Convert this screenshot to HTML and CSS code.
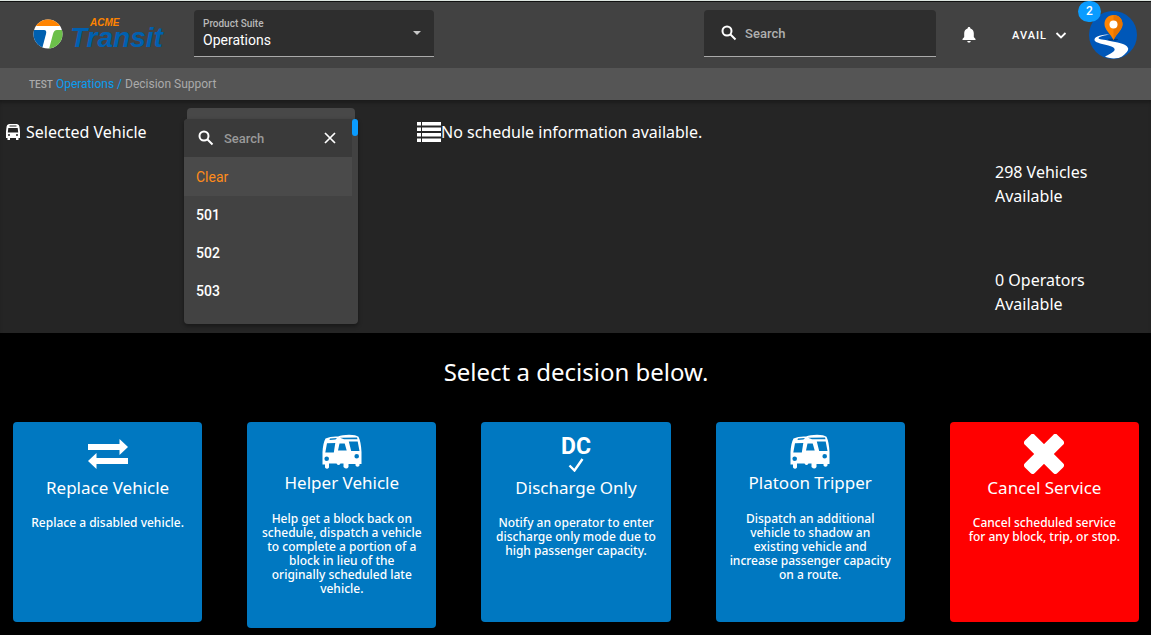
FILE: index.html
```
<!DOCTYPE html>
<html lang="en">
<head>
    <meta charset="UTF-8">
    <meta name="viewport" content="width=device-width, initial-scale=1.0">
    <title>Decision Support</title>
    <link rel="stylesheet" href="styles.css">
</head>
<body>
    <header class="topbar">
        <a class="logo" href="#" aria-label="ACME Transit">
            <svg class="logo-mark" viewBox="0 0 30 30">
                <clipPath id="logoClip"><circle cx="15" cy="15" r="14.5"/></clipPath>
                <g clip-path="url(#logoClip)">
                    <rect width="30" height="30" fill="#fff"/>
                    <path d="M0 0h30v7H0z" fill="#ff8400"/>
                    <path d="M0 11h11q3 0 2 4L9 30H0z" fill="#0060b0"/>
                    <path d="M30 11h-6q-3 0-4 4l-4 15h14z" fill="#6cc04a"/>
                </g>
            </svg>
            <span class="logo-text">
                <span class="logo-acme">ACME</span>
                <span class="logo-transit">Transit</span>
            </span>
        </a>
        <div class="suite">
            <label for="suite">Product Suite</label>
            <select id="suite">
                <option>Operations</option>
            </select>
            <svg class="suite-arrow" viewBox="0 0 8 4"><path d="M0 0h8L4 4z" fill="#c8c8c8"/></svg>
        </div>
        <div class="top-search">
            <svg class="icon-search" viewBox="0 0 16 16"><circle cx="6" cy="6" r="4.5"/><path d="M9.5 9.5l5 5"/></svg>
            <input type="text" placeholder="Search" aria-label="Search">
        </div>
        <div class="account">
            <button class="bell" aria-label="Notifications">
                <svg viewBox="0 0 14 16"><path d="M7 0c-.9 0-1.400.6-1.400 1.500C3.300 2.100 2.200 4 2.200 6.300V10L.5 12v1h13v-1l-1.700-2V6.300c0-2.300-1.100-4.200-3.400-4.800C8.400.6 7.900 0 7 0zM5.300 14h3.400c0 1-.7 1.600-1.700 1.600S5.300 15 5.300 14z" fill="#fff"/></svg>
            </button>
            <button class="user">AVAIL
                <svg viewBox="0 0 12 12"><path d="M1.500 4L6 8.500 10.500 4" fill="none" stroke="#fff" stroke-width="1.800"/></svg>
            </button>
            <div class="avatar">
                <svg viewBox="0 0 48 48">
                    <clipPath id="avatarClip"><circle cx="24" cy="24" r="24"/></clipPath>
                    <circle cx="24" cy="24" r="24" fill="#0057b8"/>
                    <path clip-path="url(#avatarClip)" d="M21 23.500C13 23.500 6 25 5.500 28.500c-.4 3 6 4 12 5.500 7 1.800 10 3.500 7 6.500-2 2-5 3-8.500 5 3 2 13 3 17 0 4-3 7-6 6-8.500-2-5-12-5.500-18-7C15 28.500 9.500 28.500 9.500 27c.5-1.600 6-2.500 11.500-3.500z" fill="#fff"/>
                    <ellipse cx="24" cy="28.500" rx="5" ry="1" fill="#003d80"/>
                    <path d="M24.500 4C19 4 15.500 8 15.500 13c0 6 6 9.500 9 16 3-6.500 9-10 9-16 0-5-3.500-9-9-9z" fill="#ff8400"/>
                    <path d="M24.500 4c5.500 0 9 4 9 9 0 6-6 9.500-9 16z" fill="#e87400"/>
                    <circle cx="24.500" cy="13.500" r="4" fill="#fff"/>
                </svg>
                <span class="badge">2</span>
            </div>
        </div>
    </header>

    <nav class="breadcrumb">
        <span class="env">TEST</span>
        <a href="#">Operations /</a>
        <span>Decision Support</span>
    </nav>

    <section class="info">
        <div class="vehicle">
            <span class="vehicle-label">
                <svg class="bus" viewBox="0 0 14 16"><path fill="#fff" fill-rule="evenodd" d="M3 0h8q2.400.5 2.400 2.500l.6 5V14h-1.500v2H10v-2H4v2H1.500v-2H0V7.500l.6-5Q.6.500 3 0zM3.500 1.500v1h7v-1zM2.300 4l-.5 4.500h10.400L11.700 4zM3 10a1 1 0 1 0 0 2 1 1 0 0 0 0-2zm8 0a1 1 0 1 0 0 2 1 1 0 0 0 0-2z"/></svg>
                Selected Vehicle
            </span>
            <div class="picker">
                <button class="picker-field" aria-label="Selected Vehicle"></button>
                <div class="menu">
                    <div class="menu-search">
                        <svg class="icon-search" viewBox="0 0 16 16"><circle cx="6" cy="6" r="4.500"/><path d="M9.500 9.500l5 5"/></svg>
                        <input type="text" placeholder="Search" aria-label="Search vehicles">
                        <button class="menu-close" aria-label="Clear search">
                            <svg viewBox="0 0 12 12"><path d="M1 1l10 10M11 1L1 11" stroke="#fff" stroke-width="1.700"/></svg>
                        </button>
                    </div>
                    <button class="option clear">Clear</button>
                    <button class="option">501</button>
                    <button class="option">502</button>
                    <button class="option">503</button>
                    <span class="scroll-thumb"></span>
                </div>
            </div>
        </div>
        <div class="schedule">
            <svg class="list" viewBox="0 0 24 20"><path fill="#fff" d="M0 0h4v3.500H0zM5 0h19v3.500H5zM0 5.500h4V9H0zM5 5.500h19V9H5zM0 11h4v3.500H0zM5 11h19v3.500H5zM0 16.500h4V20H0zM5 16.500h19V20H5z"/></svg>
            No schedule information available.
        </div>
        <div class="counts">
            <p>298 Vehicles Available</p>
            <p>0 Operators Available</p>
        </div>
    </section>

    <main class="decisions">
        <h1>Select a decision below.</h1>
        <div class="cards">
            <button class="card">
                <svg class="card-icon" viewBox="0 0 40 40"><path fill="#fff" d="M0 10h31.500V5l8.500 8-8.500 8v-5H0zM40 30H8.500v5L0 27l8.500-8v5H40z"/></svg>
                <span class="card-title">Replace Vehicle</span>
                <span class="card-text">Replace a disabled vehicle.</span>
            </button>
            <button class="card">
                <svg class="card-icon wide" viewBox="0 0 40 35"><use href="#buses"/></svg>
                <span class="card-title">Helper Vehicle</span>
                <span class="card-text">Help get a block back on schedule, dispatch a vehicle to complete a portion of a block in lieu of the originally scheduled late vehicle.</span>
            </button>
            <button class="card">
                <span class="card-icon dc">
                    <span>DC</span>
                    <svg viewBox="0 0 16 14"><path d="M1.500 7.500l5 5L14.500 1" fill="none" stroke="#fff" stroke-width="2.400"/></svg>
                </span>
                <span class="card-title">Discharge Only</span>
                <span class="card-text">Notify an operator to enter discharge only mode due to high passenger capacity.</span>
            </button>
            <button class="card">
                <svg class="card-icon wide" viewBox="0 0 40 35"><use href="#buses"/></svg>
                <span class="card-title">Platoon Tripper</span>
                <span class="card-text">Dispatch an additional vehicle to shadow an existing vehicle and increase passenger capacity on a route.</span>
            </button>
            <button class="card cancel">
                <svg class="card-icon" viewBox="0 0 40 40">
                    <g fill="#fff">
                        <rect x="-3" y="13" width="46" height="14" rx="3" transform="rotate(45 20 20)"/>
                        <rect x="-3" y="13" width="46" height="14" rx="3" transform="rotate(-45 20 20)"/>
                    </g>
                </svg>
                <span class="card-title">Cancel Service</span>
                <span class="card-text">Cancel scheduled service for any block, trip, or stop.</span>
            </button>
        </div>
    </main>

    <!-- Shared pair-of-buses icon -->
    <svg class="symbols">
        <symbol id="buses" viewBox="0 0 40 35">
            <path fill="#fff" fill-rule="evenodd" d="M3.500 4.500Q9 2 16 2.500 20 .8 27 .8q7 0 9.500 2Q39 8 39.500 18v12h-2v1.500q-2 2.500-4 0V30h-7v3q-2 3-5 0v-3.500h-3q-2 3-4 0H7v4q-2 2.500-4 0v-3H.5V18Q1 9 3.500 4.500zM8 4.500L7.500 6l6-.5 1.500-1.500zM18 3.800l4 1.400h13.500l-.5-1.700zM5 9.200L3.300 18.500h8.500L13.300 9zM17.500 9.500l-1.500 7h8.700l-2-7zM26.800 7.500l2.400 9.500h8.300l-1.800-9.500zM4.700 22.400a2.300 2.300 0 1 0 0 4.600 2.300 2.300 0 0 0 0-4.600zM34.700 20a2.300 2.300 0 1 0 0 4.600 2.300 2.300 0 0 0 0-4.600z"/>
        </symbol>
    </svg>
</body>
</html>
```
FILE: styles.css
```
* {
    box-sizing: border-box;
}

body {
    margin: 0;
    background-color: #000;
    color: #fff;
    font-family: "Noto Sans", sans-serif;
    font-size: 16px;
}

button, input, select {
    border: none;
    background: none;
    color: inherit;
    font-family: Roboto, sans-serif;
    padding: 0;
}

svg {
    display: block;
    flex-shrink: 0;
}

.symbols {
    position: absolute;
    width: 0;
    height: 0;
}

/* Top bar */
.topbar {
    display: flex;
    align-items: flex-start;
    height: 68px;
    padding: 8px 14px 0 33px;
    border-top: 1px solid #dde5e0;
    background-color: #424242;
    box-shadow: inset 0 1px #111;
    font-family: Roboto, sans-serif;
}

.logo {
    display: flex;
    align-items: center;
    gap: 7px;
    width: 161px;
    height: 50px;
    text-decoration: none;
    font-style: italic;
}

.logo-mark {
    width: 30px;
    height: 30px;
}

.logo-text {
    display: flex;
    flex-direction: column;
    font-family: "Liberation Sans", sans-serif;
    font-weight: 700;
}

.logo-acme {
    padding-left: 20px;
    color: #ff8400;
    font-size: 10px;
    line-height: 8px;
}

.logo-transit {
    color: #0060b0;
    font-size: 28px;
    line-height: 22px;
}

.suite {
    position: relative;
    width: 240px;
    height: 47px;
    margin-top: 1px;
    padding: 8px 9px;
    border-bottom: 1px solid #aaa;
    border-radius: 4px 4px 0 0;
    background-color: #2e2e2e;
}

.suite label {
    display: block;
    color: #b8b8b8;
    font-size: 10px;
    font-weight: 500;
    line-height: 12px;
}

.suite select {
    width: 100%;
    appearance: none;
    font-size: 14px;
    line-height: 20px;
}

.suite-arrow {
    position: absolute;
    right: 13px;
    top: 21px;
    width: 8px;
    height: 4px;
}

.icon-search {
    width: 16px;
    height: 16px;
    fill: none;
    stroke: #fff;
    stroke-width: 2;
}

.top-search {
    display: flex;
    align-items: center;
    gap: 8px;
    width: 232px;
    height: 47px;
    margin-top: 1px;
    margin-left: auto;
    padding: 0 17px;
    border-bottom: 1px solid #aaa;
    border-radius: 4px 4px 0 0;
    background-color: #2e2e2e;
}

.top-search input, .menu-search input {
    min-width: 0;
    flex: 1;
    font-size: 13px;
    font-weight: 500;
}

.top-search input::placeholder {
    color: #b0b0b0;
}

.account {
    display: flex;
    align-items: center;
    height: 52px;
    margin-left: 26px;
}

.bell svg {
    width: 14px;
    height: 16px;
}

.user {
    display: flex;
    align-items: center;
    gap: 8px;
    margin-left: 36px;
    font-size: 11px;
    font-weight: 500;
    letter-spacing: 1px;
}

.user svg {
    width: 12px;
    height: 12px;
}

.avatar {
    position: relative;
    margin-left: 22px;
}

.avatar svg {
    width: 48px;
    height: 48px;
}

.badge {
    position: absolute;
    left: -11px;
    top: -10px;
    width: 23px;
    height: 21px;
    border-radius: 11px;
    background-color: #0a9cff;
    font-size: 12px;
    font-weight: 500;
    line-height: 20px;
    text-align: center;
}

/* Breadcrumb */
.breadcrumb {
    display: flex;
    align-items: center;
    gap: 3px;
    height: 32px;
    padding-left: 29px;
    background-color: #555;
    color: #aaa;
    font-family: Roboto, sans-serif;
    font-size: 12px;
}

.breadcrumb .env {
    font-size: 10px;
    font-weight: 500;
}

.breadcrumb a {
    color: #0a9cf0;
    text-decoration: none;
}

/* Vehicle and schedule info */
.info {
    display: grid;
    grid-template-columns: 417px 1fr 156px;
    min-height: 233px;
    background-color: #252525;
    box-shadow: inset 0 4px 4px -2px #181818;
    line-height: 24px;
}

.vehicle {
    display: flex;
    align-items: flex-start;
    padding: 8px 0 0 6px;
}

.vehicle-label {
    display: flex;
    align-items: center;
    gap: 6px;
    width: 181px;
    padding-top: 12px;
    white-space: nowrap;
}

.bus {
    width: 14px;
    height: 16px;
}

.picker {
    position: relative;
    width: 168px;
}

.picker-field {
    display: block;
    width: 100%;
    height: 40px;
    border-radius: 4px;
    background-color: #484848;
}

.menu {
    position: absolute;
    left: -3px;
    top: 11px;
    width: 174px;
    padding-bottom: 14px;
    border-radius: 4px;
    background-color: #424242;
    box-shadow: 0 2px 4px rgba(0, 0, 0, 0.4);
}

.menu-search {
    display: flex;
    align-items: center;
    gap: 10px;
    height: 38px;
    margin-right: 6px;
    padding: 0 16px 0 14px;
    border-radius: 4px 0 0 0;
    background-color: #3a3a3a;
}

.menu-search input::placeholder {
    color: #999;
}

.menu-close svg {
    width: 12px;
    height: 12px;
}

.option {
    display: block;
    width: 100%;
    height: 38px;
    padding-left: 12px;
    font-size: 14px;
    font-weight: 500;
    text-align: left;
}

.option.clear {
    width: 168px;
    height: 39px;
    background-color: #4a4a4a;
    color: #ff8c1a;
    font-weight: 400;
}

.scroll-thumb {
    position: absolute;
    right: 0;
    top: 0;
    width: 6px;
    height: 17px;
    border-radius: 3px;
    background-color: #0a9cff;
}

.schedule {
    display: flex;
    align-items: flex-start;
    padding-top: 20px;
}

.list {
    width: 24px;
    height: 20px;
    margin-top: 2px;
}

.counts {
    padding: 60px 40px 0 0;
}

.counts p {
    margin: 0 0 60px;
}

.counts p:last-child {
    margin-bottom: 0;
}

/* Decision cards */
.decisions {
    padding: 23px 12px 6px 13px;
}

h1 {
    margin: 0 0 35px;
    font-size: 24px;
    font-weight: 400;
    line-height: 31px;
    text-align: center;
}

.cards {
    display: grid;
    grid-template-columns: repeat(5, 1fr);
    gap: 45px;
    align-items: start;
}

.card {
    display: flex;
    flex-direction: column;
    align-items: center;
    min-height: 200px;
    padding: 12px 14px 32px;
    border-radius: 4px;
    background-color: #0078c1;
    font-family: "Noto Sans", sans-serif;
    text-align: center;
    cursor: pointer;
}

.card.cancel {
    background-color: #f00;
}

.card-icon {
    width: 40px;
    height: 40px;
}

.card-icon.wide {
    height: 35px;
}

.dc {
    display: flex;
    flex-direction: column;
    align-items: center;
    padding-top: 2px;
    font-family: Roboto, sans-serif;
    font-size: 23px;
    font-weight: 700;
    line-height: 22px;
}

.dc svg {
    width: 16px;
    height: 14px;
}

.card-title {
    margin-bottom: 14px;
    font-size: 17px;
    line-height: 28px;
}

.card-icon.wide ~ .card-text {
    padding-top: 1px;
}

.card-text {
    font-size: 12px;
    font-weight: 500;
    line-height: 14px;
}
```
